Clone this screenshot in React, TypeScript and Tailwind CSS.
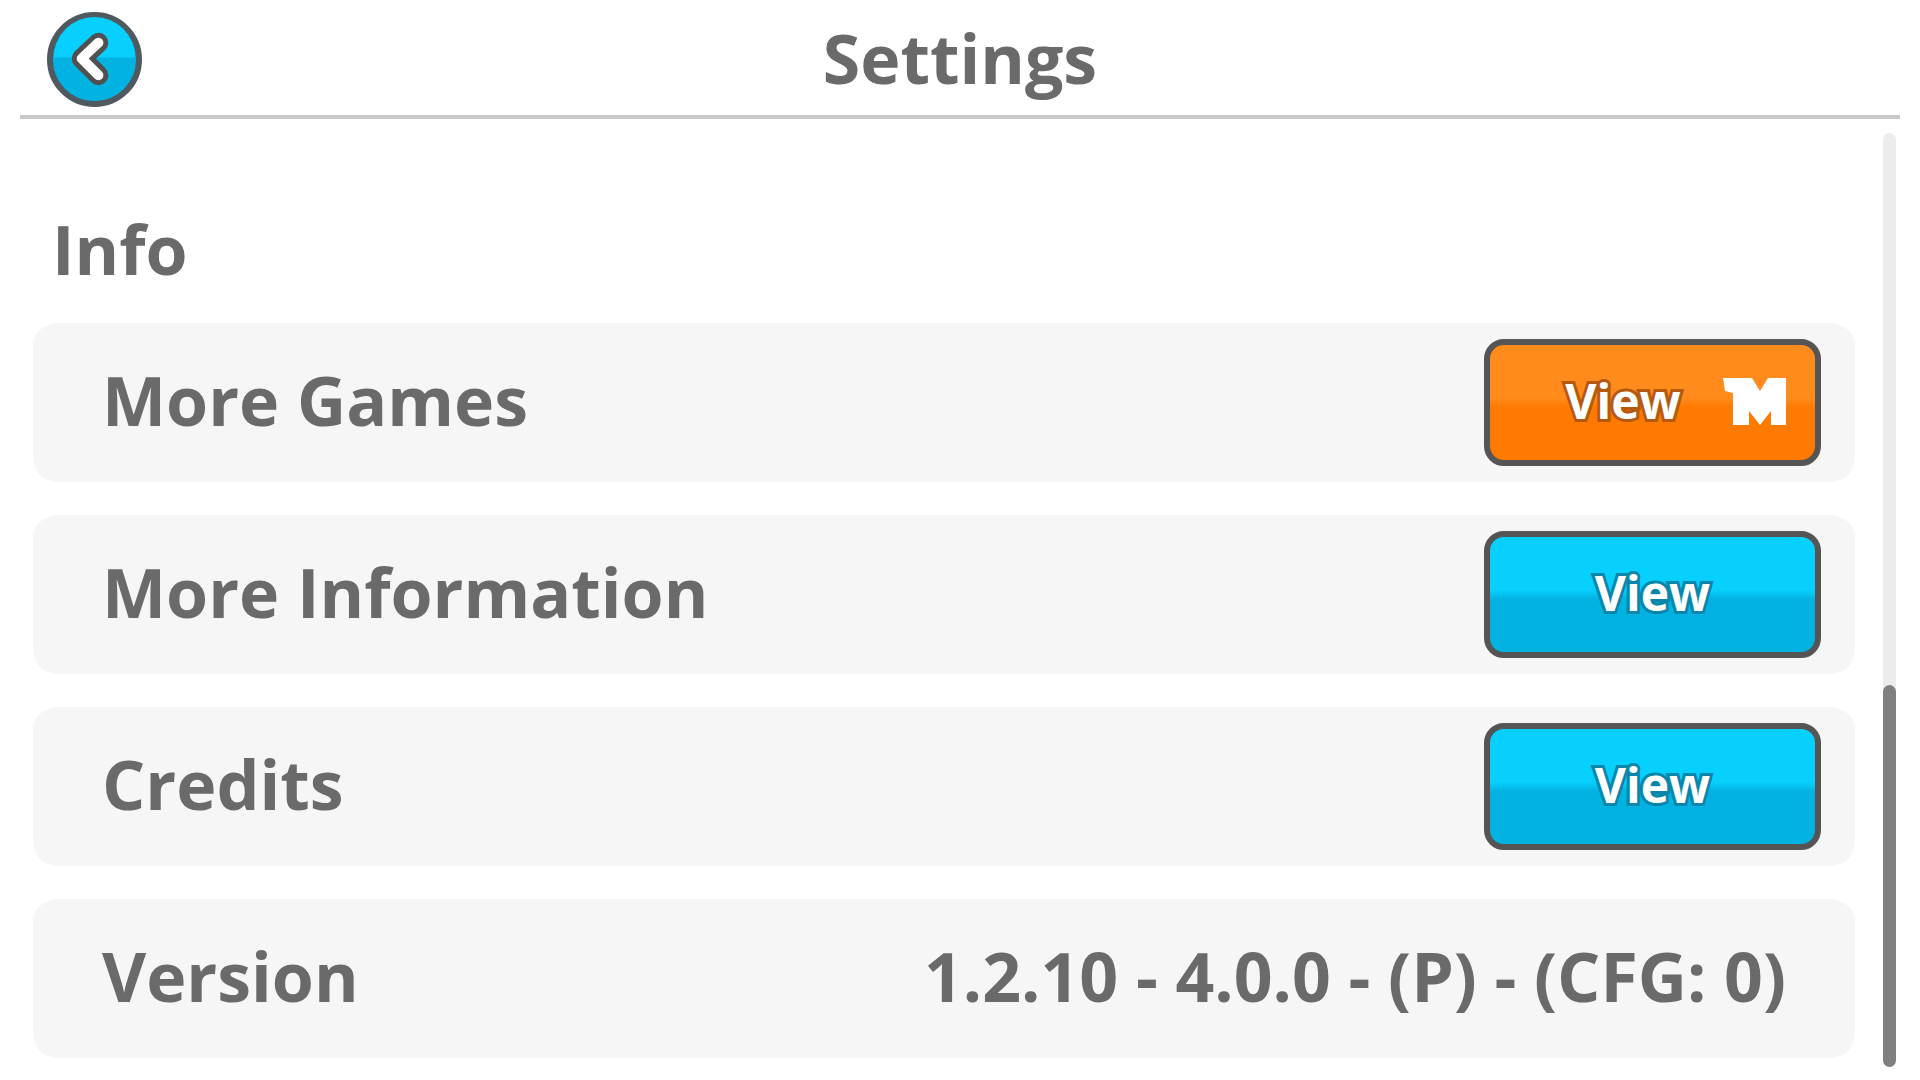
const font = "font-['Open_Sans',sans-serif]";

const ViewButton = ({ orange = false }: { orange?: boolean }) => (
  <button
    className={`flex h-[127px] w-[337px] items-center justify-center rounded-[20px] border-[6px] border-[#555555] pb-[3px] ${
      orange
        ? "bg-[linear-gradient(#ff8b1c_0%,#ff8b1c_46%,#ff7a00_54%,#ff7a00_100%)]"
        : "bg-[linear-gradient(#07d0ff_0%,#07d0ff_46%,#02b3e2_54%,#02b3e2_100%)]"
    }`}
  >
    <span
      className={`text-[48px] leading-none font-bold text-white [paint-order:stroke_fill] ${
        orange
          ? "ml-[46px] [-webkit-text-stroke:6px_#b4590f]"
          : "[-webkit-text-stroke:6px_#0a86aa]"
      }`}
    >
      View
    </span>
    {orange && (
      <svg viewBox="0 0 63 47" className="ml-[42px] h-[47px] w-[63px]">
        <path d="M0 0H29L37 13L45 0H63V47H48V33L37 47L26 33V47H10V15L2 13Z" fill="#ffffff" />
      </svg>
    )}
  </button>
);

const Row = ({ label, children }: { label: string; children: React.ReactNode }) => (
  <div className="flex h-[159px] items-center justify-between rounded-[24px] bg-[#f6f6f6] pr-[34px] pl-[69px]">
    <span className="pb-[6px] text-[68px] leading-none font-bold text-[#6a6a6a]">{label}</span>
    {children}
  </div>
);

export default function App() {
  return (
    <div className={`${font} h-[1080px] w-[1920px] overflow-hidden bg-white`}>
      <header className="relative mx-5 flex h-[119px] items-center justify-center border-b-[4px] border-[#c8c8c8]">
        <button className="absolute top-[12px] left-[27px] h-[95px] w-[95px]">
          <svg viewBox="0 0 96 96" className="h-full w-full">
            <circle cx="48" cy="48" r="45" fill="#02b3e2" stroke="#505860" strokeWidth="6" />
            <path d="M7 46A41 41 0 0 1 89 46Z" fill="#07d0ff" />
            <path d="M52 31L35 47L52 64" fill="none" stroke="#505050" strokeWidth="20" strokeLinecap="round" strokeLinejoin="round" />
            <path d="M52 31L35 47L52 64" fill="none" stroke="#ffffff" strokeWidth="10" strokeLinecap="round" strokeLinejoin="round" />
          </svg>
        </button>
        <h1 className="text-[68px] leading-none font-bold text-[#6a6a6a]">Settings</h1>
      </header>

      <div className="flex">
        <main className="ml-[33px] w-[1822px]">
          <h2 className="ml-[19px] flex h-[204px] items-center pt-[55px] text-[68px] leading-none font-bold text-[#6a6a6a]">
            Info
          </h2>
          <div className="flex flex-col gap-[33px]">
            <Row label="More Games">
              <ViewButton orange />
            </Row>
            <Row label="More Information">
              <ViewButton />
            </Row>
            <Row label="Credits">
              <ViewButton />
            </Row>
            <Row label="Version">
              <span className="mr-[35px] pb-[6px] text-[68px] leading-none font-bold text-[#6a6a6a]">
                1.2.10 - 4.0.0 - (P) - (CFG: 0)
              </span>
            </Row>
          </div>
        </main>

        <div className="mt-[14px] ml-[28px] flex h-[934px] w-[13px] flex-col justify-end rounded-full bg-[#ececec]">
          <div className="h-[382px] w-full rounded-full bg-[#808080]" />
        </div>
      </div>
    </div>
  );
}
